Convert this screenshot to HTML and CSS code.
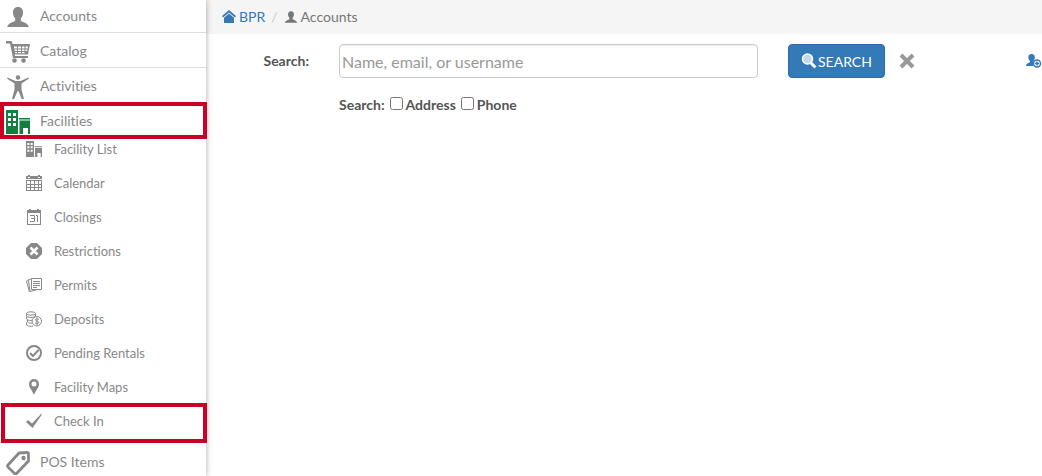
FILE: index.html
```html
<!DOCTYPE html>
<html lang="en">
<head>
    <meta charset="UTF-8">
    <meta name="viewport" content="width=device-width, initial-scale=1.0">
    <title>Accounts</title>
    <link rel="stylesheet" href="styles.css">
</head>
<body>
    <!-- shared icons -->
    <svg class="sprite" aria-hidden="true">
        <symbol id="icon-user" viewBox="0 0 24 24">
            <path d="M12 2c3.600 0 5.200 2.400 5 6-.1 2.500-1.200 4.200-2.200 5.400v2.300c1.400 1.400 7.200 2 8 6.300H1.200c.8-4.300 6.600-4.900 8-6.300v-2.300C8.200 12.200 7.100 10.500 7 8c-.2-3.600 1.400-6 5-6z"/>
        </symbol>
        <symbol id="icon-building" viewBox="0 0 24 24">
            <path fill-rule="evenodd" d="M0 0h12v24H0zM2 3v3h3V3zM7 3v3h3V3zM2 8v3h3V8zM7 8v3h3V8zM2 13v3h3v-3zM7 13v3h3v-3zM13 8h11v1.500H13zM13.500 10.500H24V24h-2v-6h-5v6h-3.500z"/>
        </symbol>
    </svg>

    <div class="layout">
        <nav class="sidebar">
            <ul class="menu">
                <li><a href="#" class="menu-link">
                    <svg class="icon"><use href="#icon-user"/></svg>Accounts</a></li>
                <li><a href="#" class="menu-link">
                    <svg class="icon" viewBox="0 0 24 24">
                        <path d="M0 1h5.500l1 3H24l-2 10.500H8.500l.5 1.500h13v2H7L4 3.500H0z"/>
                        <path d="M8 6.500h3v2H8zM12 6.500h3v2h-3zM16 6.500h2.500v2H16zM19.500 6.500H22l-.4 2h-2.100zM8.500 9.500H11v1.500H8.800zM12 9.500h3v1.500h-3zM16 9.500h2.500v1.500H16zM19.500 9.500h2l-.3 1.500h-1.700zM9 12h2v1.200H9.200zM12 12h3v1.200h-3zM16 12h2.500v1.200H16z" fill="#fff"/>
                        <circle cx="8.500" cy="20.500" r="2.300"/><circle cx="17.500" cy="20.500" r="2.300"/>
                    </svg>Catalog</a></li>
                <li><a href="#" class="menu-link">
                    <svg class="icon" viewBox="0 0 24 24">
                        <circle cx="12" cy="2.500" r="2.200"/>
                        <path d="M1.500 2.500l8 3.500h5l8-3.500.3 1.200-7.300 4.800v6l2.500 9.500h-2.200L12.400 16h-.8L8.200 24H6l2.500-9.500v-6L1.200 3.700z"/>
                    </svg>Activities</a></li>
                <li><a href="#" class="menu-link active highlight">
                    <svg class="icon"><use href="#icon-building"/></svg>Facilities</a>
                    <ul class="submenu">
                        <li><a href="#" class="submenu-link">
                            <svg class="icon-small"><use href="#icon-building"/></svg>Facility List</a></li>
                        <li><a href="#" class="submenu-link">
                            <svg class="icon-small" viewBox="0 0 16 16">
                                <path fill-rule="evenodd" d="M0 1h2V0h2v1h8V0h2v1h2v3H0zM2 2v1h2V2zM12 2v1h2V2z"/>
                                <path fill-rule="evenodd" d="M0 5h16v11H0zM1 6v3h3V6zM5 6v3h3V6zM9 6v3h3V6zM13 6v3h2V6zM1 10v2h3v-2zM5 10v2h3v-2zM9 10v2h3v-2zM13 10v2h2v-2zM1 13v2h3v-2zM5 13v2h3v-2zM9 13v2h3v-2zM13 13v2h2v-2z"/>
                            </svg>Calendar</a></li>
                        <li><a href="#" class="submenu-link">
                            <svg class="icon-small" viewBox="0 0 16 16">
                                <path fill-rule="evenodd" d="M1 1h2V0h2v1h6V0h2v1h2v15H1zM2 4v11h12V4z"/>
                                <path d="M4 6.500h4.500v6H4M5 9.500h3.500M10 6.500h1.500V13" fill="none" stroke="currentColor"/>
                            </svg>Closings</a></li>
                        <li><a href="#" class="submenu-link">
                            <svg class="icon-small" viewBox="0 0 16 16">
                                <path d="M5 0h6l5 5v6l-5 5H5l-5-5V5z"/>
                                <path d="M4.500 4.500l7 7M11.500 4.500l-7 7" stroke="#fff" stroke-width="2.500"/>
                            </svg>Restrictions</a></li>
                        <li><a href="#" class="submenu-link">
                            <svg class="icon-small" viewBox="0 0 16 16">
                                <g fill="none" stroke="currentColor">
                                    <path d="M5.500 1.500h10v11h-10zM7 4.500h7M7 6.500h7M7 8.500h7M7 10.500h4"/>
                                    <path d="M5 2l-2.500.5 1.500 12 6-1.500M2.500 3.500L.5 4l3 11"/>
                                </g>
                            </svg>Permits</a></li>
                        <li><a href="#" class="submenu-link">
                            <svg class="icon-small" viewBox="0 0 16 16">
                                <g fill="none" stroke="currentColor">
                                    <ellipse cx="5" cy="2.500" rx="4.500" ry="1.700"/>
                                    <path d="M.5 2.500v2.500c1 2 8 2 9 0V2.500M.5 5.500V8c1 1.500 4 1.700 6 1.200M1.500 8.500V11c1 1.200 3 1.300 4.500 1M.5 11.500V14c1 1.500 5 1.500 6.500 1"/>
                                    <circle cx="10.800" cy="10.200" r="4.700"/>
                                    <path d="M12.800 8.500c-1-1-3.500-1-3.500.3s3.400 1 3.400 2.500-3 1.400-3.800.4M11 6.500v7.500"/>
                                </g>
                            </svg>Deposits</a></li>
                        <li><a href="#" class="submenu-link">
                            <svg class="icon-small" viewBox="0 0 16 16">
                                <circle cx="8" cy="8" r="7" fill="none" stroke="currentColor" stroke-width="2"/>
                                <path d="M4 8l3 3 5.500-6" fill="none" stroke="currentColor" stroke-width="2"/>
                            </svg>Pending Rentals</a></li>
                        <li><a href="#" class="submenu-link">
                            <svg class="icon-small" viewBox="0 0 16 16">
                                <path fill-rule="evenodd" d="M8 0a5 5 0 0 1 5 5c0 4-3.500 6.500-5 11C6.500 11.500 3 9 3 5a5 5 0 0 1 5-5zM8 2.500a2.500 2.500 0 1 0 0 5 2.500 2.500 0 0 0 0-5z"/>
                            </svg>Facility Maps</a></li>
                        <li><a href="#" class="submenu-link highlight">
                            <svg class="icon-small" viewBox="0 0 16 16">
                                <path d="M0 9l2-2 4 3.500L15 1l1 .5L6.500 15z"/>
                            </svg>Check In</a></li>
                    </ul>
                </li>
                <li><a href="#" class="menu-link">
                    <svg class="icon" viewBox="0 0 24 24">
                        <path d="M13 2l8-.5c1 0 1.500.5 1.500 1.500v7L10.500 22.500c-.6.600-1.300.6-2 0L2 16c-.6-.7-.6-1.300 0-2z" fill="none" stroke="currentColor" stroke-width="2.800" stroke-linejoin="round"/>
                        <circle cx="17.500" cy="7" r="2.200"/>
                    </svg>POS Items</a></li>
            </ul>
        </nav>

        <main class="content">
            <div class="breadcrumb">
                <a href="#">
                    <svg class="icon-crumb" viewBox="0 0 14 14">
                        <path d="M7 0l7 6-1 1.500-6-5-6 5L0 6z"/>
                        <path d="M7 3.500l5 4.200V13H2V7.700z"/>
                    </svg>BPR</a>
                <span class="divider">/</span>
                <span class="current"><svg class="icon-crumb"><use href="#icon-user"/></svg>Accounts</span>
            </div>

            <form class="search-form">
                <label for="search" class="search-label">Search:</label>
                <input type="text" id="search" name="search" placeholder="Name, email, or username">
                <div class="actions">
                    <button type="submit" class="btn-search">
                        <svg class="icon-small" viewBox="0 0 16 16">
                            <path d="M10 10l4.500 4.500" stroke="#fff" stroke-width="3"/>
                            <circle cx="6.500" cy="6" r="5" fill="#c6d9ec" stroke="#fff" stroke-width="1.500"/>
                        </svg>SEARCH</button>
                    <button type="reset" class="btn-clear" aria-label="Clear">
                        <svg class="icon-small" viewBox="0 0 16 16">
                            <path d="M2 2l12 12M14 2L2 14" stroke="currentColor" stroke-width="4"/>
                        </svg></button>
                    <a href="#" class="add-user" aria-label="Add account">
                        <svg class="icon-small" viewBox="0 0 16 16">
                            <path d="M5.500 1C8 1 9 2.500 8.800 5c-.1 1.500-.8 2.300-1.300 3v1c-.8 1-.8 3 0 4H0c.3-3 3-3 4-4V8c-.9-.7-1.500-1.500-1.600-3C2.200 2.500 3 1 5.500 1z"/>
                            <circle cx="11" cy="10.500" r="3.500" fill="#fff" stroke="currentColor" stroke-width="1.500"/>
                            <path d="M11 8.500v4M9 10.500h4" stroke="currentColor" stroke-width="1.500"/>
                        </svg></a>
                </div>
                <div class="options">
                    <span>Search:</span>
                    <input type="checkbox" id="address" name="address">
                    <label for="address">Address</label>
                    <input type="checkbox" id="phone" name="phone">
                    <label for="phone">Phone</label>
                </div>
            </form>
        </main>
    </div>
</body>
</html>
```
FILE: styles.css
```css
* {
    box-sizing: border-box;
}
body {
    margin: 0;
    font-family: Lato, sans-serif;
    font-size: 14px;
    line-height: 20px;
    color: #555;
    background-color: #fff;
}
a {
    color: #337ab7;
    text-decoration: none;
}
ul {
    list-style: none;
    margin: 0;
    padding: 0;
}
svg {
    fill: currentColor;
    flex: none;
}
.sprite {
    display: none;
}
.layout {
    display: flex;
    height: 100vh;
    overflow: hidden;
}

/* sidebar */
.sidebar {
    position: relative;
    width: 206px;
    flex: none;
    box-shadow: 0 0 6px rgba(0, 0, 0, 0.35);
    font-variant-ligatures: none;
}
.menu-link {
    position: relative;
    display: flex;
    align-items: center;
    gap: 10px;
    height: 35px;
    padding: 2px 0 0 6px;
    border-bottom: 1px solid #ddd;
    color: #888;
}
.menu > li:first-child .menu-link {
    height: 33px;
    padding-top: 0;
}
.menu > li:last-child .menu-link {
    border-top: 1px solid #ddd;
    height: 39px;
    padding-top: 0;
}
.icon {
    width: 24px;
    height: 24px;
    margin-top: 2px;
}
.icon-small {
    width: 16px;
    height: 16px;
}
.active .icon {
    color: #11803f;
}
.submenu {
    padding-bottom: 4px;
}
.submenu-link {
    position: relative;
    display: flex;
    align-items: center;
    gap: 12px;
    padding: 7px 0 7px 26px;
    font-size: 13px;
    color: #888;
}
.submenu li:first-child .submenu-link {
    padding-top: 1px;
}
.highlight::after {
    content: "";
    position: absolute;
    top: -1px;
    right: -1px;
    bottom: -2px;
    left: 0;
    z-index: 1;
    border: 4px solid #cc0022;
}
.submenu .highlight::after {
    bottom: -5px;
    left: 1px;
}

/* main area */
.content {
    flex: 1;
}
.breadcrumb {
    display: flex;
    align-items: center;
    gap: 6px;
    height: 34px;
    padding: 0 16px;
    background-color: #f5f5f5;
}
.breadcrumb a,
.current {
    display: flex;
    align-items: center;
    gap: 3px;
}
.current {
    color: #777;
}
.divider {
    color: #ccc;
}
.icon-crumb {
    width: 14px;
    height: 14px;
}
.search-form {
    display: grid;
    grid-template-columns: 103px 1fr 254px;
    column-gap: 30px;
    row-gap: 17px;
    align-items: center;
    padding-top: 10px;
}
.search-label {
    text-align: right;
    font-weight: bold;
}
#search {
    width: 100%;
    height: 34px;
    padding: 2px;
    border: 1px solid #ccc;
    border-radius: 4px;
    font-family: inherit;
    font-size: 16px;
    color: #555;
    box-shadow: inset 0 1px 1px rgba(0, 0, 0, 0.075);
}
#search::placeholder {
    color: #999;
}
.actions {
    display: flex;
    align-items: center;
    gap: 14px;
}
button {
    display: flex;
    align-items: center;
    padding: 0;
    border: none;
    background: none;
    font-family: inherit;
    font-size: 14px;
    cursor: pointer;
}
.btn-search {
    gap: 1px;
    height: 34px;
    padding: 0 12px;
    border: 1px solid #2e6da4;
    border-radius: 4px;
    background-color: #337ab7;
    color: #fff;
}
.btn-clear {
    color: #999;
}
.add-user {
    display: flex;
    margin-left: auto;
}
.options {
    grid-column: 2 / 4;
    display: flex;
    align-items: center;
    gap: 3px;
    font-weight: bold;
}
.options input {
    width: 13px;
    height: 13px;
    margin: 0 0 3px 2px;
}
```
